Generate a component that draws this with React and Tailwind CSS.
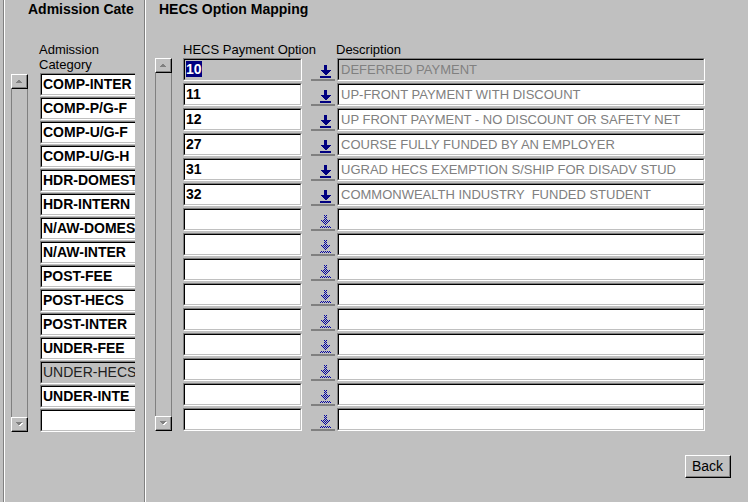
import React from 'react';

const font = "font-['Liberation_Sans',Arial,sans-serif]";

const categories = [
  { name: 'COMP-INTER' },
  { name: 'COMP-P/G-F' },
  { name: 'COMP-U/G-F' },
  { name: 'COMP-U/G-H' },
  { name: 'HDR-DOMEST' },
  { name: 'HDR-INTERN' },
  { name: 'N/AW-DOMES' },
  { name: 'N/AW-INTER' },
  { name: 'POST-FEE' },
  { name: 'POST-HECS' },
  { name: 'POST-INTER' },
  { name: 'UNDER-FEE' },
  { name: 'UNDER-HECS', current: true },
  { name: 'UNDER-INTE' },
  { name: '' },
];

const options = [
  { code: '10', desc: 'DEFERRED PAYMENT', current: true },
  { code: '11', desc: 'UP-FRONT PAYMENT WITH DISCOUNT' },
  { code: '12', desc: 'UP FRONT PAYMENT - NO DISCOUNT OR SAFETY NET' },
  { code: '27', desc: 'COURSE FULLY FUNDED BY AN EMPLOYER' },
  { code: '31', desc: 'UGRAD HECS EXEMPTION S/SHIP FOR DISADV STUD' },
  { code: '32', desc: 'COMMONWEALTH INDUSTRY  FUNDED STUDENT' },
];

// pad to 15 rows
const optionRows = [...options];
while (optionRows.length < 15) optionRows.push({ code: '', desc: '', empty: true });

function Sunken({ className = '', inner = '', children }) {
  return (
    <div className={`border border-t-[#808080] border-l-[#808080] border-b-white border-r-white ${className}`}>
      <div className={`h-full border border-t-black border-l-black border-b-[#c0c0c0] border-r-[#c0c0c0] ${inner}`}>
        {children}
      </div>
    </div>
  );
}

function ScrollBtn({ down }) {
  return (
    <div className="h-[15px] w-[17px] border border-t-white border-l-white border-b-black border-r-black">
      <div className="flex h-full items-center justify-center border-b border-r border-[#808080]">
        <svg width="8" height="5" viewBox="0 0 8 5" shapeRendering="crispEdges">
          {down ? (
            <>
              <polygon points="1,1 8,1 4.5,4.5" fill="#ffffff" />
              <polygon points="0,0 7,0 3.5,3.5" fill="#808080" />
            </>
          ) : (
            <polygon points="0.5,4 7.5,4 4,0.5" fill="#808080" />
          )}
        </svg>
      </div>
    </div>
  );
}

function ScrollBar({ track, className = '' }) {
  return (
    <div className={`flex w-[17px] flex-col ${className}`}>
      <ScrollBtn />
      <div className={`border-x border-[#808080] ${track}`} />
      <ScrollBtn down />
    </div>
  );
}

function ArrowIcon({ id, disabled }) {
  const fill = disabled ? `url(#dither-${id})` : '#000080';
  return (
    <svg width="11" height="13" viewBox="0 0 11 13" shapeRendering="crispEdges">
      <defs>
        <pattern id={`dither-${id}`} width="2" height="2" patternUnits="userSpaceOnUse">
          <rect x="0" y="0" width="1" height="1" fill="#0000a0" />
          <rect x="1" y="1" width="1" height="1" fill="#0000a0" />
        </pattern>
      </defs>
      <rect x="4" y="0" width="3" height="5" fill={fill} />
      <polygon points="0,5 11,5 5.5,10.5" fill={fill} />
      <rect x="0" y="11" width="11" height="2" fill={fill} />
    </svg>
  );
}

export default function App() {
  return (
    <div className={`flex h-[502px] w-[748px] overflow-hidden bg-[#c0c0c0] text-black ${font}`}>
      {/* Admission category panel */}
      <div className="ml-[3px] w-[141px] border-l border-[#808080]">
        <div className="h-full border-l border-white">
          <div className="pl-[23px] pt-[1px]">
            <div className="w-[106px] overflow-hidden whitespace-nowrap text-[14px] font-bold leading-[16px]">
              Admission Category
            </div>
          </div>
          <div className="mt-[25px] pl-[34px] text-[13px] leading-[15px]">
            Admission
            <br />
            Category
          </div>
          <div className="mt-[1px] flex pl-[6px]">
            <ScrollBar track="h-[328px]" className="mt-[1px]" />
            <div className="ml-[12px] w-[95px] overflow-hidden">
              {categories.map((c, i) => (
                <Sunken
                  key={i}
                  className="mb-[1px] h-[23px] w-[120px]"
                  inner={c.current ? 'bg-[#c0c0c0]' : 'bg-white'}
                >
                  <div
                    className={`whitespace-nowrap pl-[1px] text-[14px] leading-[19px] ${
                      c.current ? 'font-normal text-[#202020]' : 'font-bold'
                    }`}
                  >
                    {c.name}
                  </div>
                </Sunken>
              ))}
            </div>
          </div>
        </div>
      </div>

      {/* HECS option mapping panel */}
      <div className="flex-1 border-l border-[#808080]">
        <div className="flex h-full flex-col border-l border-white">
          <div className="pl-[13px] pt-[1px] text-[14px] font-bold leading-[16px]">HECS Option Mapping</div>
          <div className="mt-[25px] flex pl-[37px] text-[13px] leading-[15px]">
            <div className="w-[153px]">HECS Payment Option</div>
            <div>Description</div>
          </div>
          <div className="mt-[1px] flex pl-[9px]">
            <ScrollBar track="h-[343px]" />
            <div className="ml-[11px]">
              {optionRows.map((o, i) => (
                <div key={i} className="mb-[2px] flex h-[23px]">
                  <Sunken className="w-[119px]" inner={o.current ? 'bg-[#c0c0c0]' : 'bg-white'}>
                    <div className="pl-[1px] text-[14px] font-bold leading-[19px]">
                      {o.current ? (
                        <span className="bg-[#000080] text-white">{o.code}</span>
                      ) : (
                        o.code
                      )}
                    </div>
                  </Sunken>
                  <div className="ml-[9px] w-[24px] border-b-2 border-[#808080] pl-[9px] pt-[7px]">
                    <ArrowIcon id={i} disabled={o.empty} />
                  </div>
                  <Sunken className="ml-[2px] w-[368px]" inner={o.current ? 'bg-[#c0c0c0]' : 'bg-white'}>
                    <div className="whitespace-pre pl-[2px] text-[13px] leading-[19px] text-[#808080]">{o.desc}</div>
                  </Sunken>
                </div>
              ))}
            </div>
          </div>
          <div className="mr-[17px] mt-[22px] flex justify-end">
            <button className="h-[23px] w-[46px] border border-t-white border-l-white border-b-black border-r-black p-0">
              <div className="flex h-full items-center justify-center border-b border-r border-[#808080] text-[14px] leading-none">
                Back
              </div>
            </button>
          </div>
        </div>
      </div>
    </div>
  );
}
